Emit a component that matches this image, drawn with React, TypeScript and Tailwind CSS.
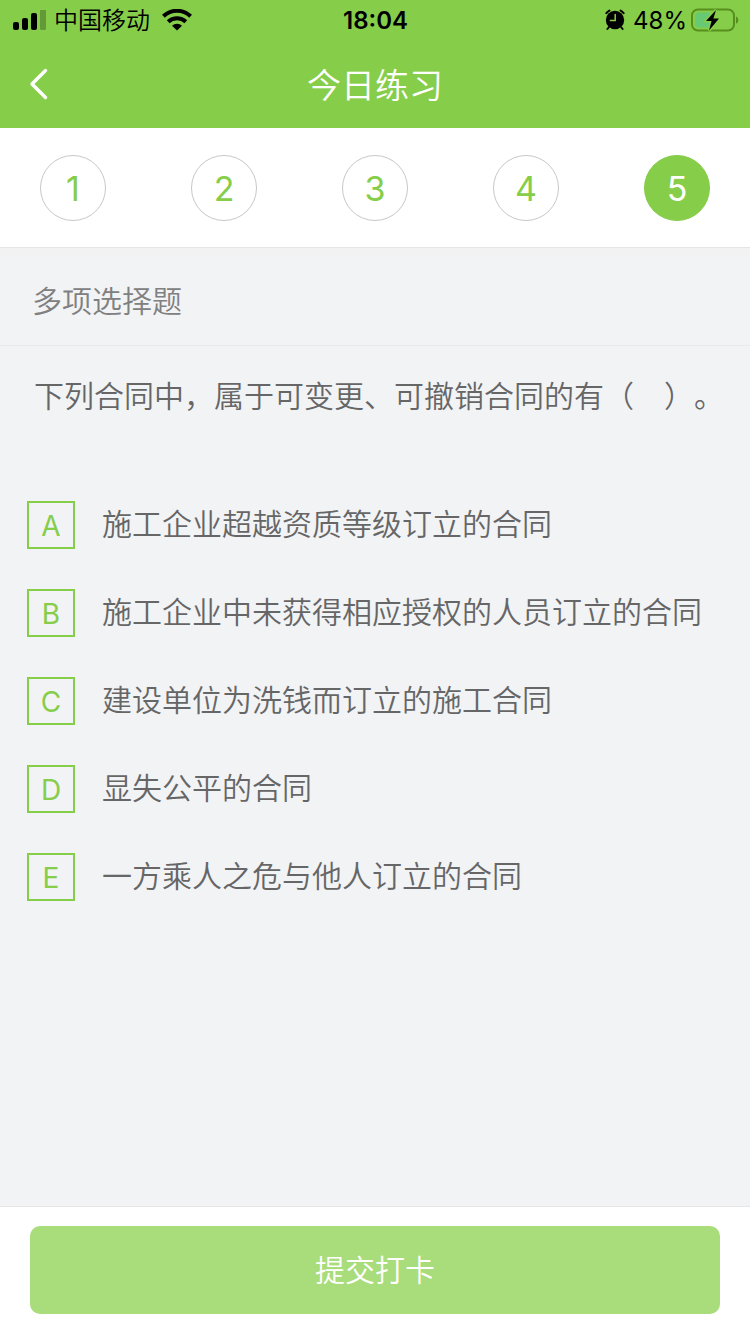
import type React from 'react';
import { useState } from 'react';

interface Option {
    key: string;
    text: string;
}

const steps = [1, 2, 3, 4, 5];

const options: Option[] = [
    { key: 'A', text: '施工企业超越资质等级订立的合同' },
    { key: 'B', text: '施工企业中未获得相应授权的人员订立的合同' },
    { key: 'C', text: '建设单位为洗钱而订立的施工合同' },
    { key: 'D', text: '显失公平的合同' },
    { key: 'E', text: '一方乘人之危与他人订立的合同' },
];

const SignalIcon = () => (
    <svg width="34" height="20" viewBox="0 0 34 20" aria-hidden="true">
        <rect x="1" y="12" width="6" height="8" rx="2" />
        <rect x="10" y="8" width="6" height="12" rx="2" />
        <rect x="19" y="3" width="6" height="17" rx="2" />
        <rect x="28" y="-1" width="6" height="21" rx="1.5" opacity="0.25" />
    </svg>
);

const WifiIcon = () => (
    <svg width="30" height="22" viewBox="0 0 30 22" aria-hidden="true">
        <g fill="none" stroke="#000" strokeWidth="4">
            <path d="M1.4 7.3a19.5 19.5 0 0 1 27.2 0" />
            <path d="M6.2 12.8a12.6 12.6 0 0 1 17.6 0" />
        </g>
        <path d="M10 16.8a7 7 0 0 1 10 0L15 21.5z" />
    </svg>
);

const AlarmIcon = () => (
    <svg width="20" height="22" viewBox="0 0 20 22" aria-hidden="true">
        <circle cx="10" cy="11" r="9.2" />
        <path
            d="M1.4 4.2a12 12 0 0 1 3-2.6M18.6 4.2a12 12 0 0 0-3-2.6M4 18l-1.6 2M16 18l1.6 2"
            fill="none"
            stroke="#000"
            strokeWidth="2"
            strokeLinecap="round"
        />
        <path
            d="M10.2 5.6v6H5.4"
            fill="none"
            stroke="#86cd4a"
            strokeWidth="1.5"
            strokeLinecap="round"
        />
    </svg>
);

const BatteryIcon = () => (
    <svg width="48" height="24" viewBox="0 0 48 24" aria-hidden="true">
        <rect
            x="1"
            y="1.5"
            width="42"
            height="21"
            rx="6"
            fill="none"
            stroke="#568f1d"
            strokeWidth="2"
        />
        <path
            d="M8 4.5h10.5v15H8a4 4 0 0 1-4-4v-7a4 4 0 0 1 4-4z"
            fill="#67c973"
        />
        <path d="M45 8.5c3.2 1.2 3.2 6 0 7.2z" fill="#568f1d" />
        <path
            d="M25 2L15 13h5.6L18 22.500 28 10.500h-5.600z"
            stroke="#86cd4a"
            strokeWidth="3"
            paintOrder="stroke"
        />
    </svg>
);

const StatusBar = () => (
    <div className="grid h-10 grid-cols-3 items-center pr-[11px] pl-3 text-2xl text-black">
        <div className="flex items-center">
            <SignalIcon />
            <span className="ml-2 pt-0.5">中国移动</span>
            <span className="ml-3">
                <WifiIcon />
            </span>
        </div>
        <time className="pt-0.5 text-center font-semibold">18:04</time>
        <div className="flex items-center justify-end">
            <AlarmIcon />
            <span className="mr-1 ml-2 pt-0.5 font-normal">48%</span>
            <BatteryIcon />
        </div>
    </div>
);

const OptionRow: React.FC<{
    option: Option;
    checked: boolean;
    onToggle: () => void;
}> = ({ option, checked, onToggle }) => (
    <li>
        <label className="flex cursor-pointer items-center gap-[27px]">
            <span className="grid size-12 shrink-0 place-items-center">
                <input
                    type="checkbox"
                    className="col-start-1 row-start-1 size-12 cursor-pointer appearance-none border-2 border-[#86cd4a] checked:bg-[#86cd4a]"
                    checked={checked}
                    onChange={onToggle}
                />
                <span
                    className={`pointer-events-none col-start-1 row-start-1 pt-0.5 text-[28px] leading-12 font-normal ${
                        checked ? 'text-white' : 'text-[#86cd4a]'
                    }`}
                >
                    {option.key}
                </span>
            </span>
            <span className="text-[30px] leading-12">{option.text}</span>
        </label>
    </li>
);

const App: React.FC = () => {
    const [current, setCurrent] = useState(5);
    const [selected, setSelected] = useState<string[]>([]);

    const toggle = (key: string) => {
        setSelected((prev) =>
            prev.includes(key) ? prev.filter((k) => k !== key) : [...prev, key],
        );
    };

    return (
        <div className="flex min-h-screen flex-col bg-[#f2f3f5] font-['Inter','Noto_Sans_CJK_SC',sans-serif] font-[350] text-[#666] [text-spacing-trim:space-all]">
            {/* header */}
            <header className="bg-[#86cd4a]">
                <StatusBar />
                <div className="grid h-22 grid-cols-[64px_1fr_64px] items-center text-white">
                    <button
                        className="flex h-full cursor-pointer items-center pl-7"
                        aria-label="返回"
                    >
                        <svg
                            width="20"
                            height="32"
                            viewBox="0 0 20 32"
                            fill="none"
                            stroke="currentColor"
                            strokeWidth="3.4"
                            strokeLinecap="round"
                            strokeLinejoin="round"
                        >
                            <path d="M17.5 2.5L4 16l13.5 13.5" />
                        </svg>
                    </button>
                    <h1 className="pt-1 text-center text-[34px] leading-12 font-[350]">
                        今日练习
                    </h1>
                </div>
            </header>

            {/* steps */}
            <nav className="flex justify-between border-b border-[#e6e6e6] bg-white px-10 pt-[27px] pb-[26px]">
                {steps.map((step) => (
                    <button
                        key={step}
                        className={`size-[66px] cursor-pointer rounded-full border text-[34px] font-normal ${
                            step === current
                                ? 'border-[#86cd4a] bg-[#86cd4a] text-white'
                                : 'border-[#c8c8c8] bg-white text-[#86cd4a]'
                        }`}
                        onClick={() => setCurrent(step)}
                    >
                        {step}
                    </button>
                ))}
            </nav>

            {/* question */}
            <main className="flex-1">
                <h2 className="border-t-8 border-b border-t-[#f2f2f2] border-b-[#e9eaec] px-8 pt-[21px] pb-5 text-[30px] leading-12 font-[350] text-[#808080]">
                    多项选择题
                </h2>
                <fieldset className="pt-[26px] pr-5 pl-[27px]">
                    <legend className="contents">
                        <span className="block pl-[7px] text-[30px] leading-12">
                            下列合同中，属于可变更、可撤销合同的有（　）。
                        </span>
                    </legend>
                    <ul className="mt-20 space-y-10">
                        {options.map((option) => (
                            <OptionRow
                                key={option.key}
                                option={option}
                                checked={selected.includes(option.key)}
                                onToggle={() => toggle(option.key)}
                            />
                        ))}
                    </ul>
                </fieldset>
            </main>

            {/* submit */}
            <footer className="border-t border-[#e6e6e6] bg-white px-[30px] pt-[19px] pb-5">
                <button className="h-22 w-full cursor-pointer rounded-[10px] bg-[#a9dc7a] text-[30px] text-white">
                    提交打卡
                </button>
            </footer>
        </div>
    );
};

export default App;
